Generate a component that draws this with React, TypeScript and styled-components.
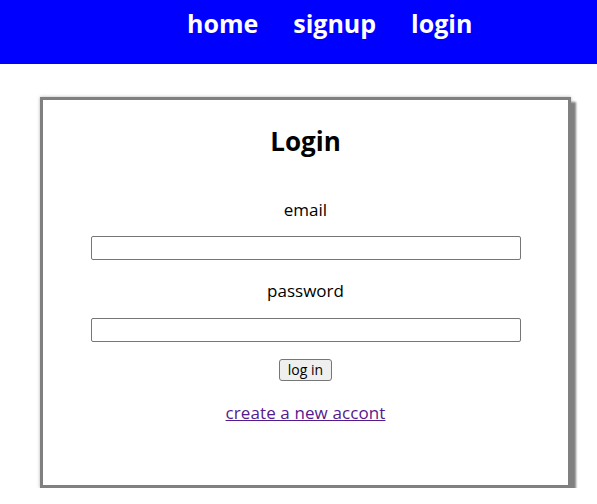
import * as React from 'react';
import styled, { createGlobalStyle } from 'styled-components';

const GlobalStyle = createGlobalStyle`
  body {
    margin: 0;
    background: #fff;
    font-family: 'Open Sans', 'Noto Sans CJK KR', sans-serif;
  }
`;

const Nav = styled.nav`
  height: 64px;
  background: #0000ff;
  display: flex;
  align-items: flex-start;
  gap: 35px;
  padding-left: 187px;
  box-sizing: border-box;
`;

const NavLink = styled.a`
  color: #fff;
  font-size: 25px;
  font-weight: 700;
  line-height: 46px;
  text-decoration: none;
`;

const Card = styled.section`
  width: 531px;
  margin: 33px 0 0 40px;
  box-sizing: border-box;
  border: 3px solid gray;
  box-shadow: 5px 5px 2px gray, 0 0 3px rgba(128, 128, 128, 0.6);
  background: #fff;
  display: flex;
  flex-direction: column;
  align-items: center;
  padding: 27px 0 60px;
`;

const Title = styled.h2`
  margin: 0;
  font-size: 26px;
  line-height: 28px;
  font-weight: 700;
  color: #000;
`;

const Label = styled.label<{ $top: number }>`
  margin-top: ${(p) => p.$top}px;
  font-size: 17px;
  line-height: 24px;
  color: #000;
`;

const Field = styled.input<{ $top: number }>`
  margin-top: ${(p) => p.$top}px;
  width: 430px;
  height: 24px;
  box-sizing: border-box;
  border: 1px solid #767676;
  border-radius: 2px;
  padding: 0 2px;
`;

const Button = styled.button`
  margin-top: 17px;
  height: 22px;
  padding: 0 8px;
  font-family: 'Open Sans', sans-serif;
  font-size: 14px;
  line-height: 18px;
  color: #000;
  background: #efefef;
  border: 1px solid #767676;
  border-radius: 3px;
`;

const Link = styled.a`
  margin-top: 20px;
  font-size: 17px;
  line-height: 24px;
  letter-spacing: 0.1px;
  color: #551a8b;
  text-decoration: underline;
`;

export default function App() {
  return (
    <>
      <GlobalStyle />
      <Nav>
        <NavLink href="#">home</NavLink>
        <NavLink href="#">signup</NavLink>
        <NavLink href="#">login</NavLink>
      </Nav>
      <Card>
        <Title>Login</Title>
        <Label $top={43}>email</Label>
        <Field $top={14} type="email" />
        <Label $top={19}>password</Label>
        <Field $top={15} type="password" />
        <Button>log in</Button>
        <Link href="#">create a new accont</Link>
      </Card>
    </>
  );
}
